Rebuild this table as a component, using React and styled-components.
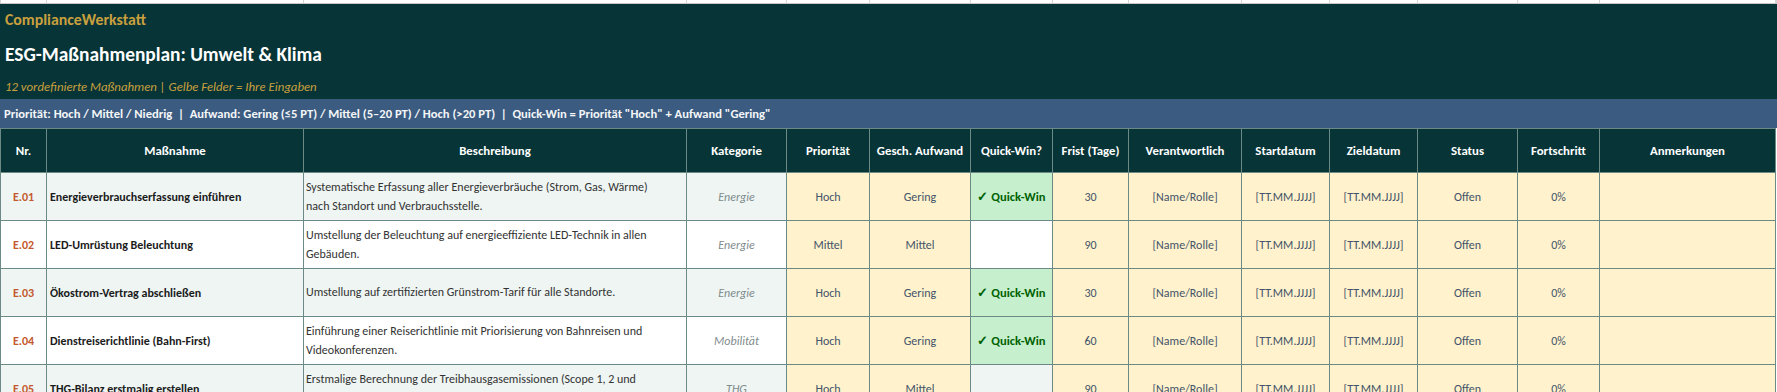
import styled, { createGlobalStyle } from "styled-components";

const COLS = [45, 256, 382, 99, 82, 100, 81, 75, 112, 87, 87, 99, 81, 175];
const TEMPLATE = COLS.map((w) => `${w}px`).join(" ");

const FONT = `Carlito, Lato, "Noto Sans", sans-serif`;
const DARK = "#073437";
const GOLD = "#c9a03e";
const LINE = "#6b8a86";
const MINT = "#eef5f3";
const YELLOW = "#fff2cc";
const SLATE = "#44546a";

const HEADERS = [
  "Nr.",
  "Maßnahme",
  "Beschreibung",
  "Kategorie",
  "Priorität",
  "Gesch. Aufwand",
  "Quick-Win?",
  "Frist (Tage)",
  "Verantwortlich",
  "Startdatum",
  "Zieldatum",
  "Status",
  "Fortschritt",
  "Anmerkungen",
];

const MEASURES = [
  {
    nr: "E.01",
    title: "Energieverbrauchserfassung einführen",
    desc: ["Systematische Erfassung aller Energieverbräuche (Strom, Gas, Wärme)", "nach Standort und Verbrauchsstelle."],
    cat: "Energie",
    prio: "Hoch",
    effort: "Gering",
    days: 30,
  },
  {
    nr: "E.02",
    title: "LED-Umrüstung Beleuchtung",
    desc: ["Umstellung der Beleuchtung auf energieeffiziente LED-Technik in allen", "Gebäuden."],
    cat: "Energie",
    prio: "Mittel",
    effort: "Mittel",
    days: 90,
  },
  {
    nr: "E.03",
    title: "Ökostrom-Vertrag abschließen",
    desc: ["Umstellung auf zertifizierten Grünstrom-Tarif für alle Standorte."],
    cat: "Energie",
    prio: "Hoch",
    effort: "Gering",
    days: 30,
  },
  {
    nr: "E.04",
    title: "Dienstreiserichtlinie (Bahn-First)",
    desc: ["Einführung einer Reiserichtlinie mit Priorisierung von Bahnreisen und", "Videokonferenzen."],
    cat: "Mobilität",
    prio: "Hoch",
    effort: "Gering",
    days: 60,
  },
  {
    nr: "E.05",
    title: "THG-Bilanz erstmalig erstellen",
    desc: ["Erstmalige Berechnung der Treibhausgasemissionen (Scope 1, 2 und", "3) als Ausgangsbasis."],
    cat: "THG",
    prio: "Hoch",
    effort: "Mittel",
    days: 90,
  },
];

const GlobalStyle = createGlobalStyle`
  html, body {
    margin: 0;
    padding: 0;
    background: #ffffff;
    overflow: hidden;
  }
  body {
    font-family: ${FONT};
  }
`;

const Sheet = styled.div`
  width: 1777px;
  height: 392px;
  overflow: hidden;
  font-family: ${FONT};
`;

//Excel gridlines above the banner

const GridStrip = styled.div`
  display: grid;
  grid-template-columns: ${TEMPLATE};
  column-gap: 1px;
  padding: 0 1px;
  height: 3px;
  background: #d4d4d4;
  border-bottom: 1px solid #c6c6c6;
  div {
    background: #ffffff;
  }
`;

const Banner = styled.header`
  height: 95px;
  background: ${DARK};
  display: flex;
  flex-direction: column;
  padding-left: 5px;
`;

const Brand = styled.div`
  height: 30px;
  display: flex;
  align-items: center;
  color: ${GOLD};
  font-weight: 700;
  font-size: 15.8px;
`;

const Title = styled.h1`
  margin: 0;
  height: 40px;
  display: flex;
  align-items: center;
  color: #ffffff;
  font-weight: 700;
  font-size: 19.4px;
`;

const Subtitle = styled.div`
  height: 25px;
  display: flex;
  align-items: center;
  color: ${GOLD};
  font-style: italic;
  font-weight: 300;
  font-size: 12.8px;
`;

const Legend = styled.div`
  height: 29px;
  background: #3b5b80;
  color: #f4f6f8;
  font-weight: 700;
  font-size: 12.6px;
  display: flex;
  align-items: center;
  padding-left: 4px;
  white-space: pre;
`;

const Table = styled.div`
  display: flex;
  flex-direction: column;
  gap: 1px;
  padding: 1px;
  width: 1774px;
  background: ${LINE};
`;

const Row = styled.div`
  display: grid;
  grid-template-columns: ${TEMPLATE};
  column-gap: 1px;
  height: ${(p) => p.$height}px;
  flex-shrink: 0;
`;

const Cell = styled.div`
  display: flex;
  align-items: center;
  justify-content: center;
  text-align: center;
  overflow: hidden;
  font-size: 12px;
  background: ${(p) => (p.$alt ? MINT : "#ffffff")};
`;

const HeadCell = styled(Cell)`
  background: ${DARK};
  color: #ffffff;
  font-weight: 700;
  font-size: 12.8px;
`;

const NrCell = styled(Cell)`
  color: #c4592f;
  font-weight: 600;
`;

const NameCell = styled(Cell)`
  justify-content: flex-start;
  text-align: left;
  padding-left: 3px;
  color: #1b1b1b;
  font-weight: 700;
`;

const DescCell = styled(Cell)`
  justify-content: flex-start;
  text-align: left;
  padding-left: 2px;
  color: #333333;
  line-height: 19px;
  white-space: nowrap;
`;

const CatCell = styled(Cell)`
  color: #7f8c8d;
  font-style: italic;
`;

const InputCell = styled(Cell)`
  background: ${YELLOW};
  color: ${SLATE};
`;

const QuickCell = styled(Cell)`
  background: ${(p) => (p.$win ? "#c6efce" : p.$alt ? MINT : "#ffffff")};
  color: #006100;
  font-weight: 700;
  font-size: 12.6px;
`;

const App = () => {
  return (
    <>
      <GlobalStyle />
      <Sheet>
        <GridStrip>
          {COLS.map((w, i) => (
            <div key={i} />
          ))}
        </GridStrip>
        <Banner>
          <Brand>ComplianceWerkstatt</Brand>
          <Title>ESG-Maßnahmenplan: Umwelt &amp; Klima</Title>
          <Subtitle>12 vordefinierte Maßnahmen | Gelbe Felder = Ihre Eingaben</Subtitle>
        </Banner>
        <Legend>
          {'Priorität: Hoch / Mittel / Niedrig  |  Aufwand: Gering (≤5 PT) / Mittel (5–20 PT) / Hoch (>20 PT)  |  Quick-Win = Priorität "Hoch" + Aufwand "Gering"'}
        </Legend>
        <Table>
          <Row $height={43}>
            {HEADERS.map((h) => (
              <HeadCell key={h}>{h}</HeadCell>
            ))}
          </Row>
          {MEASURES.map((m, i) => {
            const alt = i % 2 === 0;
            const win = m.prio === "Hoch" && m.effort === "Gering";
            return (
              <Row $height={47} key={m.nr}>
                <NrCell $alt={alt}>{m.nr}</NrCell>
                <NameCell $alt={alt}>{m.title}</NameCell>
                <DescCell $alt={alt}>
                  <div>
                    {m.desc.map((line) => (
                      <div key={line}>{line}</div>
                    ))}
                  </div>
                </DescCell>
                <CatCell $alt={alt}>{m.cat}</CatCell>
                <InputCell>{m.prio}</InputCell>
                <InputCell>{m.effort}</InputCell>
                <QuickCell $alt={alt} $win={win}>
                  {win ? "✓ Quick-Win" : ""}
                </QuickCell>
                <InputCell>{m.days}</InputCell>
                <InputCell>[Name/Rolle]</InputCell>
                <InputCell>[TT.MM.JJJJ]</InputCell>
                <InputCell>[TT.MM.JJJJ]</InputCell>
                <InputCell>Offen</InputCell>
                <InputCell>0%</InputCell>
                <InputCell />
              </Row>
            );
          })}
        </Table>
      </Sheet>
    </>
  );
};

export default App;
